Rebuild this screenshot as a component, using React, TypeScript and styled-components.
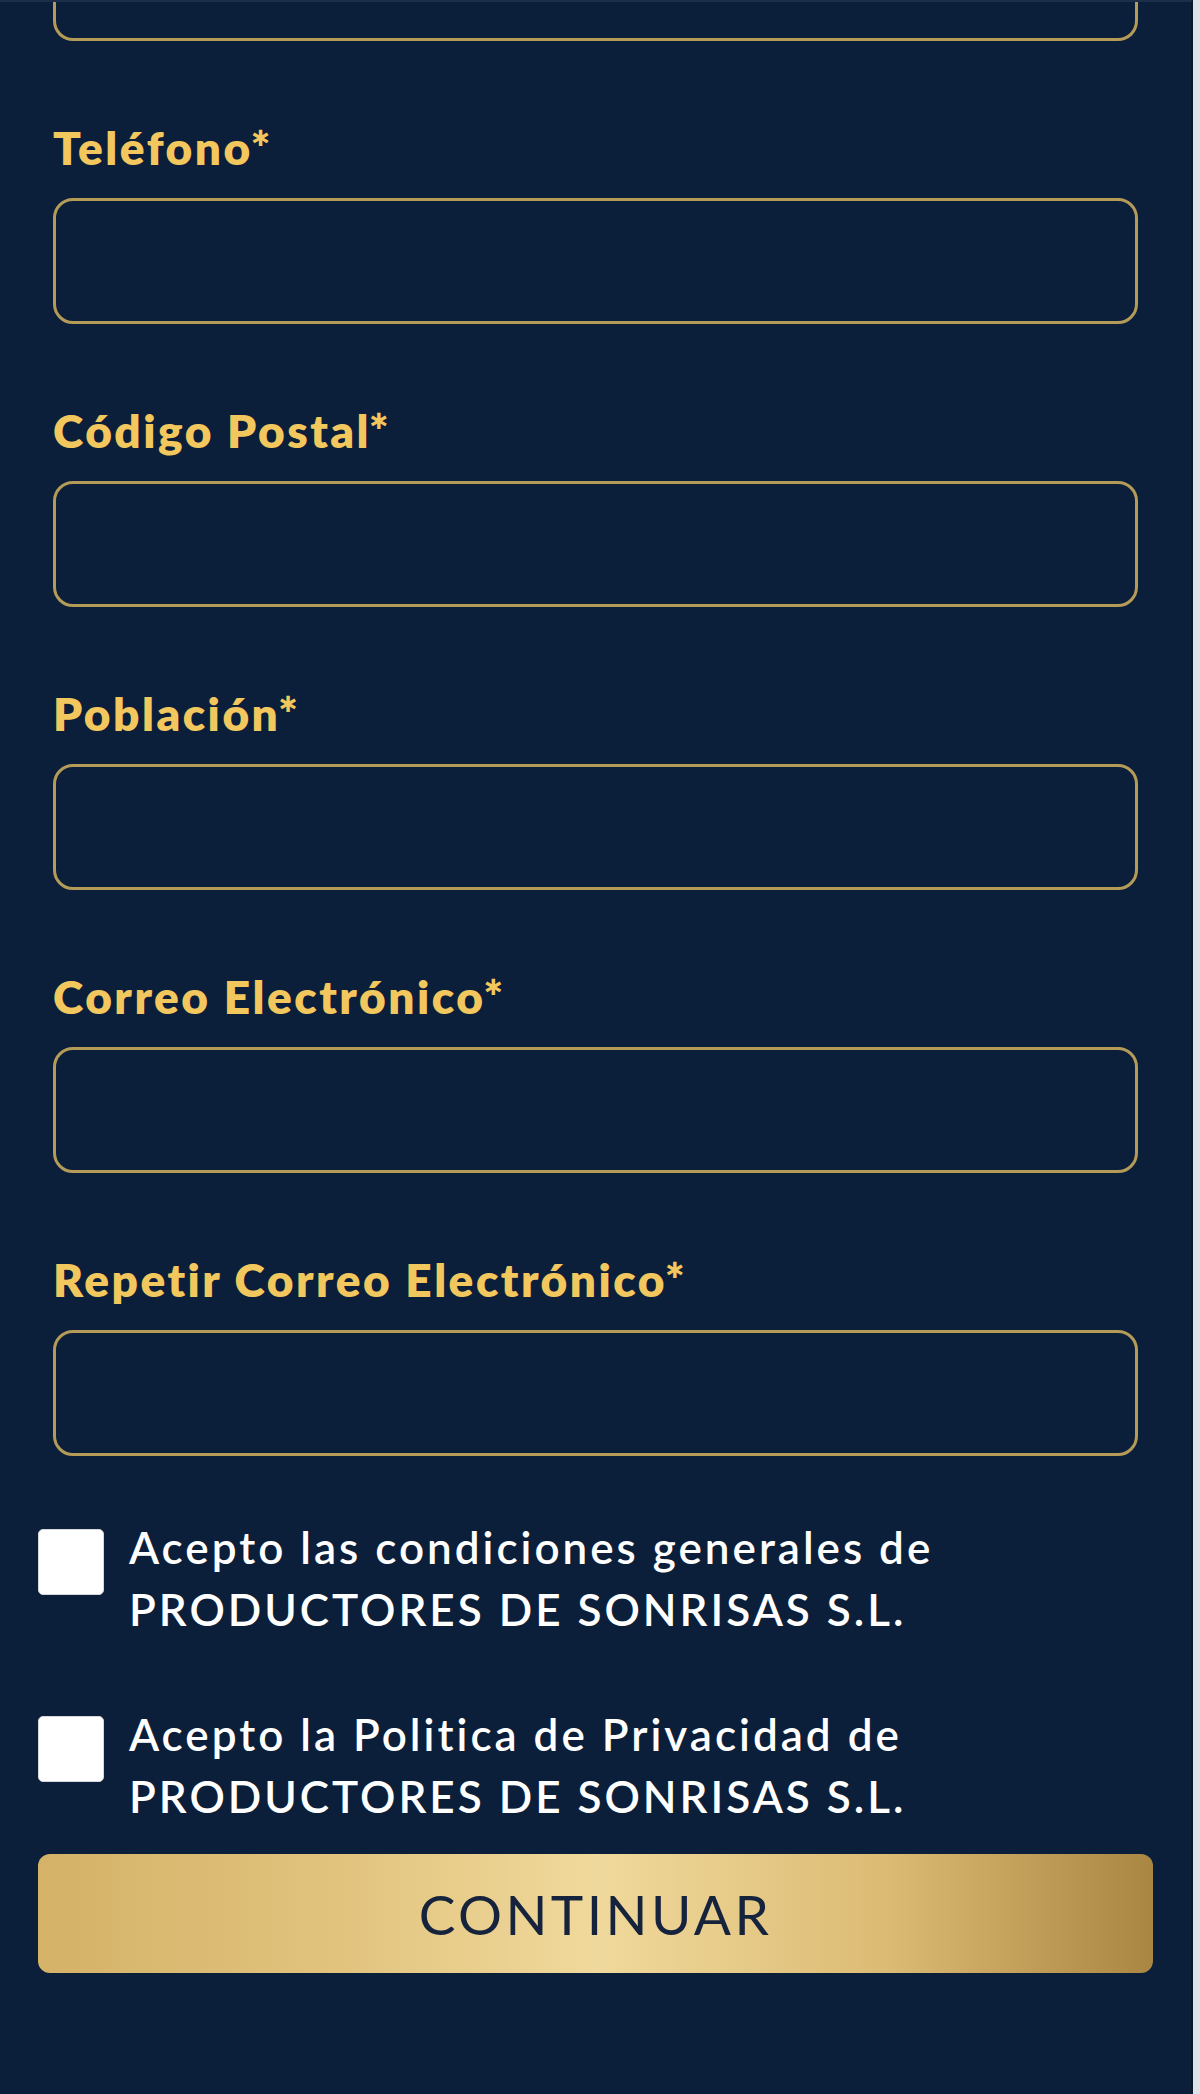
import React from 'react';
import styled, {createGlobalStyle} from 'styled-components';

const NAVY = '#0c1f3a';
const GOLD_TEXT = '#f2c85e';
const GOLD_BORDER = '#b49b58';

const GlobalStyle = createGlobalStyle`
    html, body {
        margin: 0;
        padding: 0;
        background: #dfe2e7;
    }
    * {
        box-sizing: border-box;
    }
`;

const FIELDS = ['Teléfono', 'Código Postal', 'Población', 'Correo Electrónico', 'Repetir Correo Electrónico'];

const CHECKS = [
    'Acepto las condiciones generales de PRODUCTORES DE SONRISAS S.L.',
    'Acepto la Politica de Privacidad de PRODUCTORES DE SONRISAS S.L.',
];

export default function App() {
    return (
        <>
            <GlobalStyle/>
            <Page>
                <Form onSubmit={e => e.preventDefault()}>
                    <Field>
                        <Input type="text" cut/>
                    </Field>
                    {FIELDS.map(name => (
                        <Field key={name}>
                            <Label>{name}<Star>*</Star></Label>
                            <Input type="text"/>
                        </Field>
                    ))}
                    <Checks>
                        {CHECKS.map(text => (
                            <CheckRow key={text}>
                                <CheckBox type="checkbox"/>
                                <CheckText>{text}</CheckText>
                            </CheckRow>
                        ))}
                    </Checks>
                    <SubmitButton type="submit">CONTINUAR</SubmitButton>
                </Form>
            </Page>
        </>
    );
}

const Page = styled.div`
    width: 1193px;
    min-height: 2094px;
    background: ${NAVY};
    border-top: 2px solid #1d2e4a;
    border-right: 2px solid #09182f;
`

const Form = styled.form`
    display: flex;
    flex-direction: column;
    padding: 0 38px 122px 38px;
    font-family: Lato, "Open Sans", sans-serif;
`

const Field = styled.div`
    display: flex;
    flex-direction: column;
    padding: 0 15px;
    margin-bottom: 80px;
`

const Label = styled.label`
    color: ${GOLD_TEXT};
    font-weight: 800;
    font-size: 46px;
    line-height: 53px;
    letter-spacing: 2.5px;
    margin-bottom: 24px;
    white-space: nowrap;
`

const Star = styled.span`
    letter-spacing: 0;
    margin-left: -2px;
`

const Input = styled.input<{cut?: boolean}>`
    display: block;
    width: 100%;
    height: ${p => p.cut ? '39px' : '126px'};
    background: transparent;
    border: 3px solid ${GOLD_BORDER};
    border-top: ${p => p.cut ? 'none' : `3px solid ${GOLD_BORDER}`};
    border-radius: ${p => p.cut ? '0 0 20px 20px' : '20px'};
    color: #ffffff;
    font: inherit;
    font-size: 40px;
    padding: 0 24px;
    outline: none;
`

const Checks = styled.div`
    display: flex;
    flex-direction: column;
    gap: 63px;
    margin-top: -20px;
    margin-bottom: 27px;
`

const CheckRow = styled.label`
    display: flex;
    align-items: flex-start;
    gap: 25px;
`

const CheckBox = styled.input`
    appearance: none;
    flex: none;
    width: 66px;
    height: 66px;
    margin: 13px 0 0 0;
    background: #ffffff;
    border-radius: 5px;
    border: 1px solid #d5d7db;
`

const CheckText = styled.span`
    color: #ffffff;
    font-size: 44px;
    font-weight: 600;
    line-height: 62px;
    letter-spacing: 3px;
    max-width: 920px;
`

const SubmitButton = styled.button`
    width: 100%;
    height: 119px;
    border: none;
    border-radius: 12px;
    background: linear-gradient(90deg, #d4b267 0%, #e2c47f 28%, #f0d99c 50%, #dcbb74 76%, #a98642 100%);
    color: #16233d;
    font-family: Lato, "Open Sans", sans-serif;
    font-size: 55px;
    letter-spacing: 3.4px;
    cursor: pointer;
`
